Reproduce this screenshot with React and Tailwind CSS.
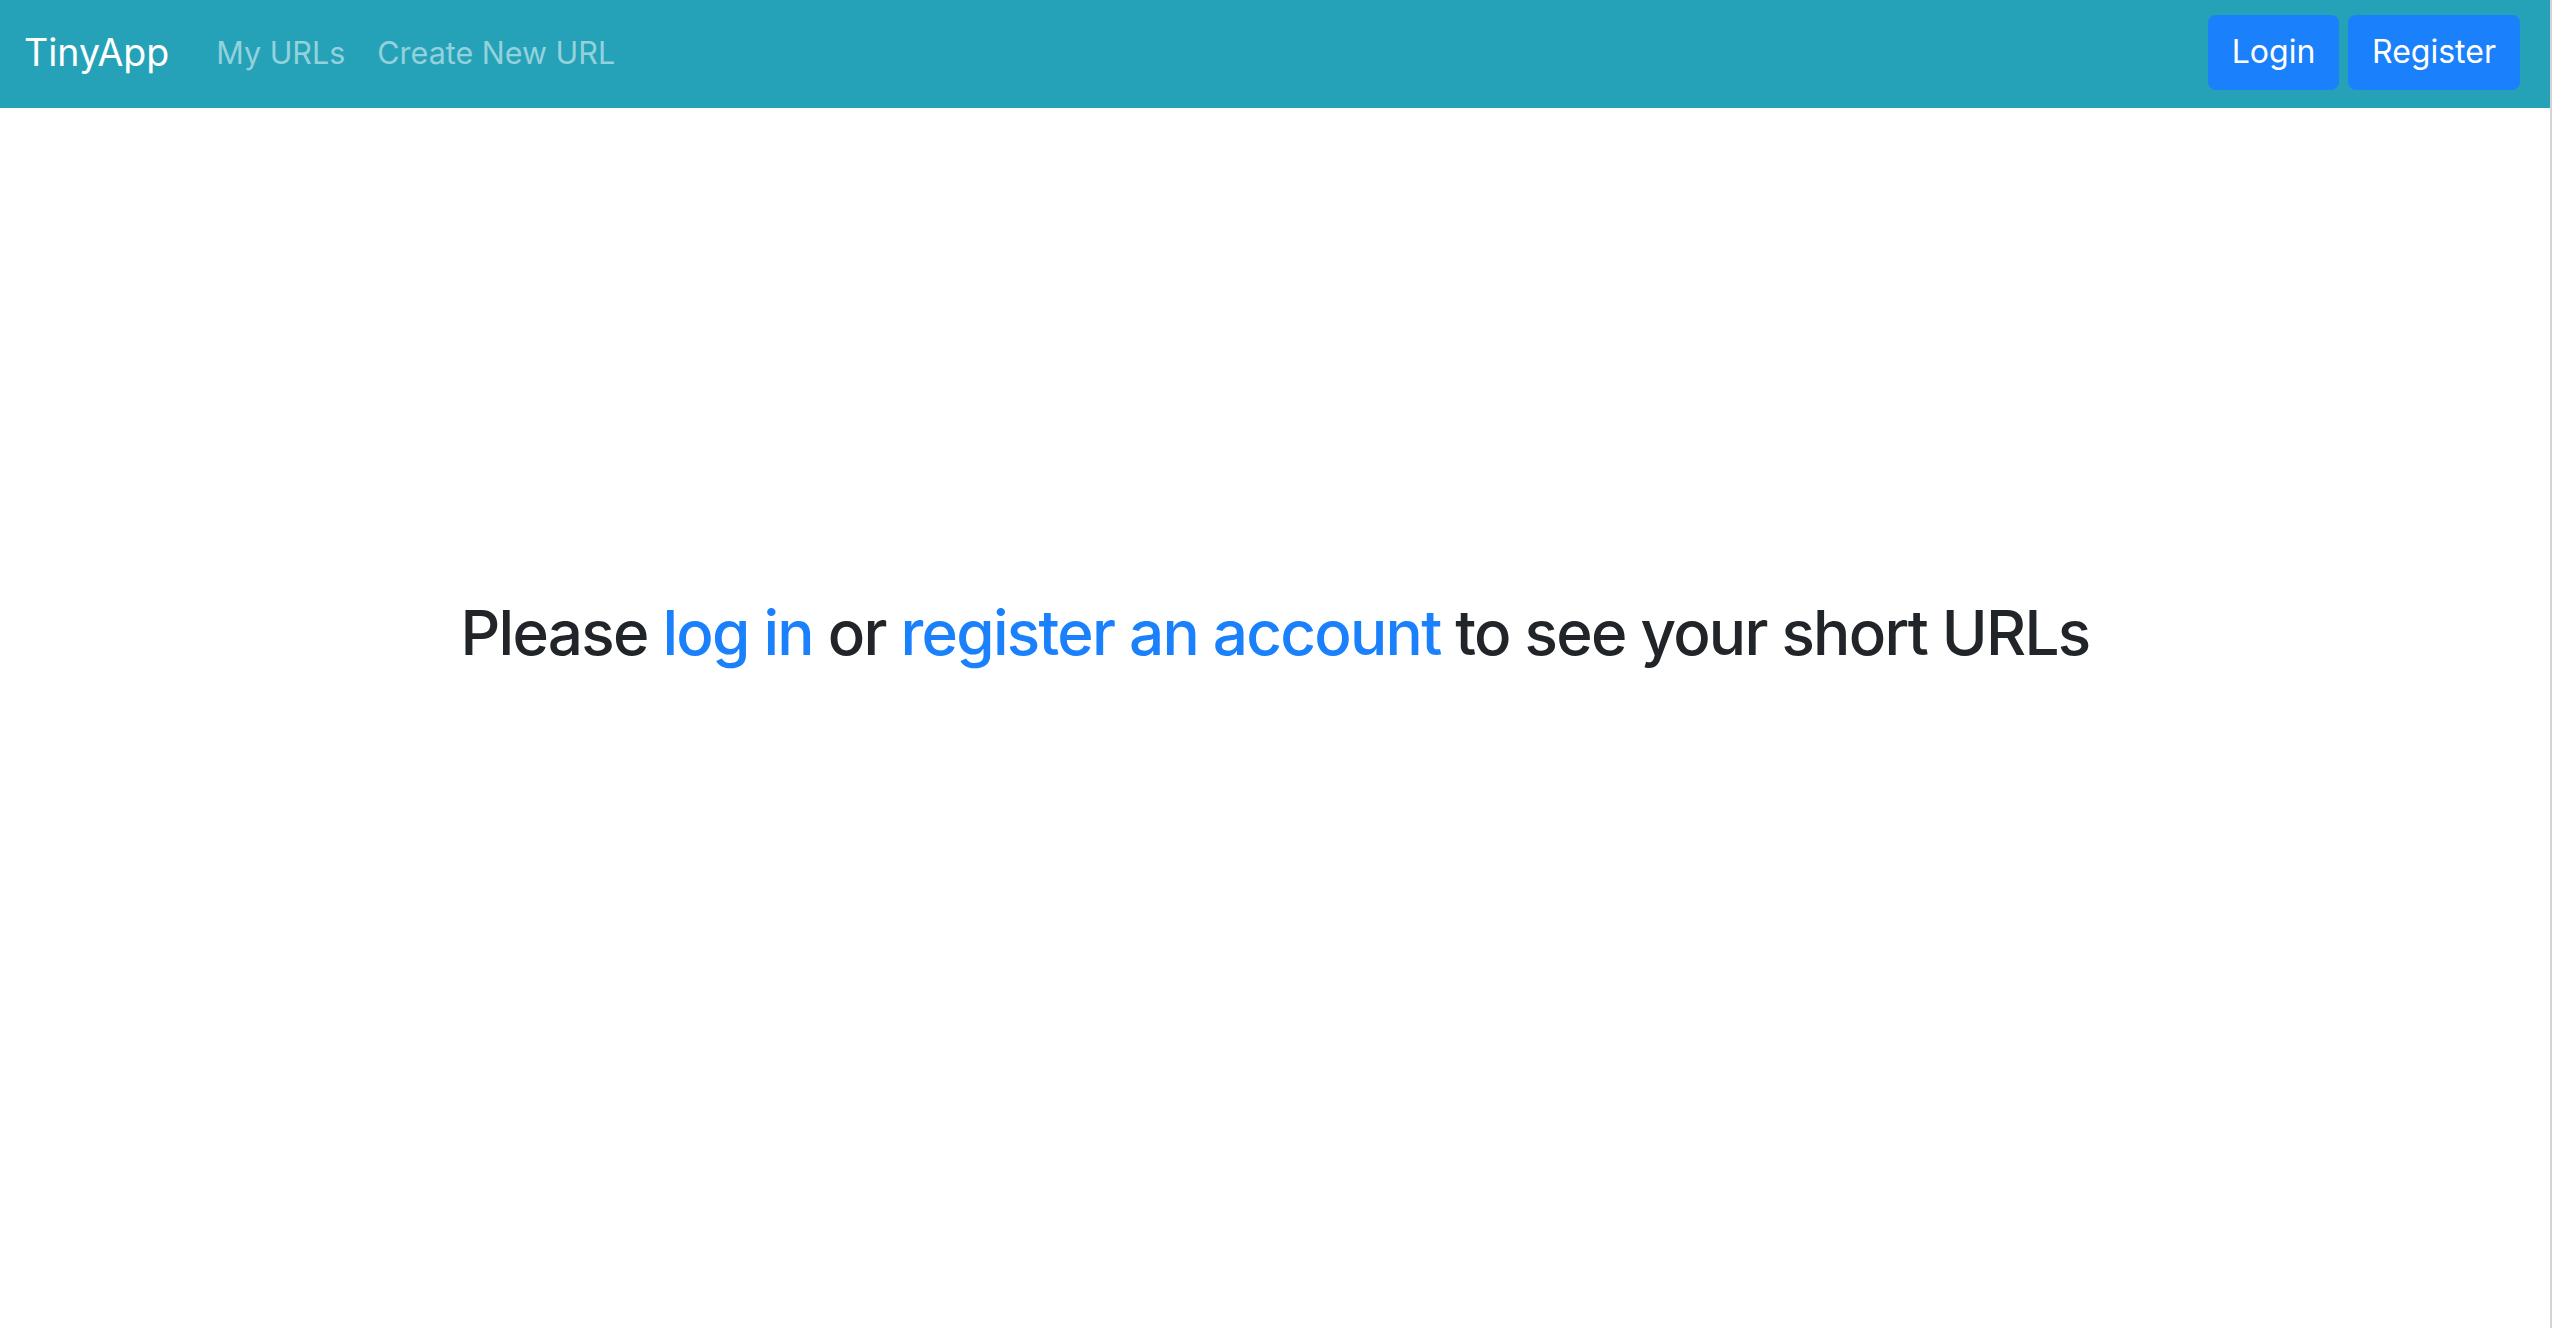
export default function App() {
  return (
    <div
      className="min-h-[1328px] w-full bg-white border-r-2 border-[#d4d4d4]"
      style={{ fontFamily: 'Inter, "Noto Sans", "Liberation Sans", sans-serif' }}
    >
      {/* Navbar */}
      <nav className="h-[108px] flex items-center justify-between bg-[#25a2b8] pl-[24px] pr-[30px]">
        <div className="mb-[2px] flex items-center">
          <a href="#" className="text-[37.5px] text-white leading-none">
            TinyApp
          </a>
          <a href="#" className="ml-[47px] text-[30.5px] text-[#93d1dc] leading-none">
            My URLs
          </a>
          <a href="#" className="ml-[32px] text-[30.5px] text-[#93d1dc] leading-none">
            Create New URL
          </a>
        </div>
        <div className="mb-[4px] flex items-center gap-[9px]">
          <button className="h-[75px] w-[131px] rounded-[8px] bg-[#1a80fb] text-[32px] text-white">
            Login
          </button>
          <button className="h-[75px] w-[172px] rounded-[8px] bg-[#1a80fb] text-[32px] text-white">
            Register
          </button>
        </div>
      </nav>

      {/* Message */}
      <main className="pt-[488px] text-center">
        <h1 className="text-[62px] leading-[1.2] font-medium text-[#212529] tracking-[-0.028em]">
          Please{" "}
          <a href="#" className="text-[#1a80fb]">
            log in
          </a>{" "}
          or{" "}
          <a href="#" className="text-[#1a80fb]">
            register an account
          </a>{" "}
          to see your short URLs
        </h1>
      </main>
    </div>
  );
}
